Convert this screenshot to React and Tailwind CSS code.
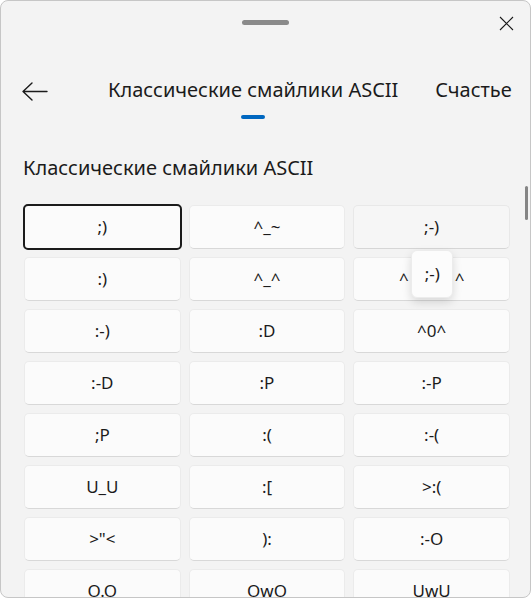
import React from 'react';

const items = [
  ';)', '^_~', ';-)',
  ':)', '^_^', null,
  ':-)', ':D', '^0^',
  ':-D', ':P', ':-P',
  ';P', ':(', ':-(',
  'U_U', ':[', '>:(',
  '>"<', '):', ':-O',
  'O.O', 'OwO', 'UwU',
];

const font = { fontFamily: '"Noto Sans", "Open Sans", sans-serif' };

export default function App() {
  return (
    <div
      className="w-[531px] h-[598px] relative overflow-hidden rounded-[8px] border border-[#c6c6c6] bg-[#f3f3f3] text-[#1b1b1b] flex flex-col"
      style={font}
    >
      {/* Title bar */}
      <div className="grid grid-cols-3 h-[44px] shrink-0">
        <div />
        <div className="flex justify-center pt-[19px]">
          <div className="w-[47px] h-[5px] rounded-full bg-[#8a8a8a]" />
        </div>
        <div className="flex justify-end pt-[15px] pr-[16px]">
          <svg width="15" height="15" viewBox="0 0 15 15" fill="none" stroke="#1b1b1b" strokeWidth="1.1">
            <path d="M1 1 L14 14 M14 1 L1 14" />
          </svg>
        </div>
      </div>

      {/* Navigation */}
      <div className="flex items-start pl-[21px] pt-[33px] h-[111px] shrink-0">
        <svg className="mt-[4px]" width="26" height="19" viewBox="0 0 26 19" fill="none" stroke="#1b1b1b" strokeWidth="1.4" strokeLinecap="round" strokeLinejoin="round">
          <path d="M1 9.5 H25 M10 1 L1 9.5 L10 18" />
        </svg>
        <div className="ml-[60px] flex flex-col items-center">
          <span className="text-[20px] leading-[24px]">Классические смайлики ASCII</span>
          <div className="mt-[13px] w-[24px] h-[4px] rounded-full bg-[#0067c0]" />
        </div>
        <span className="ml-[37px] text-[20px] leading-[24px]">Счастье</span>
      </div>

      {/* Section heading */}
      <div className="pl-[22px] h-[49px] shrink-0">
        <span className="text-[20px] leading-[24px]">Классические смайлики ASCII</span>
      </div>

      {/* Grid */}
      <div className="grid grid-cols-3 gap-[8px] pl-[23px] pr-[20px]">
        {items.map((t, i) => {
          const focused = i === 0;
          const hovered = i === 2;
          return (
            <div
              key={i}
              className={
                'relative h-[44px] rounded-[5px] border flex items-center justify-center text-[17px] ' +
                (focused
                  ? 'bg-[#fbfbfb] border-[#1b1b1b] border-2 m-[-1px] h-[46px]'
                  : hovered
                  ? 'bg-[#f6f6f6] border-[#e8e8e8] border-b-[#d6d6d6]'
                  : 'bg-[#fbfbfb] border-[#ebebeb] border-b-[#d8d8d8]')
              }
            >
              {t === null ? (
                <>
                  <div className="flex items-center gap-[46px]">
                    <span>^</span>
                    <span>^</span>
                  </div>
                  <div className="absolute left-[57px] top-[-8px] w-[42px] h-[48px] rounded-[6px] bg-[#fcfcfc] shadow-[0_4px_10px_rgba(0,0,0,0.14)] border border-[#ececec] flex items-center justify-center text-[17px]">
                    ;-)
                  </div>
                </>
              ) : (
                t
              )}
            </div>
          );
        })}
      </div>

      {/* Scrollbar thumb */}
      <div className="absolute right-[2px] top-[185px] w-[3px] h-[34px] rounded-full bg-[#858585]" />
    </div>
  );
}
